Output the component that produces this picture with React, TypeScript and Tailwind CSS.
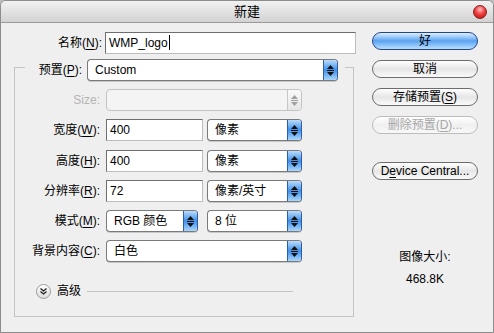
import React from 'react';

const cjk = { fontFamily: '"Liberation Sans", "Noto Sans CJK SC", sans-serif' };

const Stepper = ({ disabled }: { disabled?: boolean }) => (
  <div
    className={`w-[14px] h-full flex flex-col items-center justify-center gap-[1px] rounded-r-[4px] border-l ${
      disabled
        ? 'border-[#c8c8c8] bg-gradient-to-b from-[#fafafa] to-[#e6e6e6]'
        : 'border-[#2e5da8] bg-gradient-to-b from-[#b9dcfb] via-[#3d8fe8] to-[#a9d6fb]'
    }`}
  >
    <svg width="7" height="11" viewBox="0 0 7 11">
      <path d="M3.5 0 L7 4 L0 4 Z" fill={disabled ? '#a0a0a0' : '#101010'} />
      <rect x="0" y="5" width="7" height="1" fill={disabled ? '#a0a0a0' : '#101010'} />
      <path d="M0 7 L7 7 L3.5 11 Z" fill={disabled ? '#a0a0a0' : '#101010'} />
    </svg>
  </div>
);

const Select = ({ value, w, disabled }: { value?: string; w: string; disabled?: boolean }) => (
  <div
    className={`${w} h-[22px] flex items-stretch rounded-[4px] border overflow-hidden ${
      disabled ? 'border-[#c4c4c4] bg-[#f4f4f4]' : 'border-[#7a7a7a] border-r-[#2e5da8] bg-white shadow-[0_1px_0_#c8c8c8]'
    }`}
  >
    <div className="flex-1 pl-[7px] text-[12px] leading-[20px] text-black" style={cjk}>
      {value}
    </div>
    <Stepper disabled={disabled} />
  </div>
);

const Input = ({ value, w, caret }: { value: string; w: string; caret?: boolean }) => (
  <div
    className={`${w} h-[22px] border border-[#6e6e6e] border-b-[#bdbdbd] border-r-[#bdbdbd] bg-white pl-[3px] text-[12px] leading-[20px] text-black flex items-center`}
    style={cjk}
  >
    {value}
    {caret && <span className="inline-block w-[1px] h-[15px] bg-black ml-[1px]" />}
  </div>
);

const Label = ({ children, w = 'w-[100px]', dim }: { children: React.ReactNode; w?: string; dim?: boolean }) => (
  <div className={`${w} shrink-0 text-right text-[12px] pr-[1px] ${dim ? 'text-[#b4b4b4]' : 'text-black'}`} style={cjk}>
    {children}
  </div>
);

const Btn = ({ children, primary, disabled, mt }: { children: React.ReactNode; primary?: boolean; disabled?: boolean; mt: string }) => (
  <div
    className={`${mt} w-[106px] h-[18px] rounded-full border flex items-center justify-center text-[12px] leading-none ${
      primary
        ? 'border-[#24458c] bg-gradient-to-b from-[#dcefff] via-[#5aa2f0] to-[#b8e0ff] text-black'
        : disabled
        ? 'border-[#bcbcbc] bg-gradient-to-b from-[#ffffff] via-[#f0f0f0] to-[#f8f8f8] text-[#a8a8a8]'
        : 'border-[#6c6c6c] bg-gradient-to-b from-[#ffffff] via-[#e6e6e6] to-[#fafafa] text-black'
    }`}
    style={cjk}
  >
    {children}
  </div>
);

const U = ({ c }: { c: string }) => <span className="underline underline-offset-2">{c}</span>;

export default function App() {
  return (
    <div className="w-[494px] h-[333px] bg-[#bcbcbc] overflow-hidden">
      <div className="w-[494px] h-[333px] rounded-t-[6px] border border-[#8c8c8c] bg-[#efefef] flex flex-col overflow-hidden">
        {/* Title bar */}
        <div className="h-[22px] shrink-0 relative flex items-center justify-center border-b border-[#9a9a9a] bg-gradient-to-b from-[#f2f2f2] via-[#e2e2e2] to-[#d2d2d2]">
          <span className="text-[13px] text-black" style={cjk}>新建</span>
          <div className="absolute right-[6px] top-[4px] w-[14px] h-[14px] rounded-full border border-[#8a2020] bg-[radial-gradient(circle_at_50%_30%,#ffc0c0_0%,#f04040_45%,#b01010_100%)]" />
        </div>

        <div className="flex flex-1">
          {/* Left side */}
          <div className="w-[360px] shrink-0 flex flex-col">
            <div className="flex items-center mt-[9px] h-[21px]">
              <Label w="w-[102px]">名称(<U c="N" />):</Label>
              <div className="w-[2px]" />
              <Input value="WMP_logo" w="w-[251px]" caret />
            </div>

            {/* Group frame */}
            <div className="ml-[13px] mt-[14px] w-[340px] h-[250px] border border-[#c4c4c4] flex flex-col">
              <div className="-mt-[9px] ml-[10px] w-[320px] h-[22px] bg-[#efefef] flex items-center">
                <Label w="w-[58px]">预置(<U c="P" />):</Label>
                <div className="w-[4px]" />
                <Select value="Custom" w="w-[251px]" />
              </div>

              <div className="flex items-center mt-[8px]">
                <Label w="w-[86px]" dim>Size:</Label>
                <div className="w-[5px]" />
                <Select w="w-[196px]" disabled />
              </div>

              <div className="flex items-center mt-[8px]">
                <Label w="w-[86px]">宽度(<U c="W" />):</Label>
                <div className="w-[5px]" />
                <Input value="400" w="w-[97px]" />
                <div className="w-[4px]" />
                <Select value="像素" w="w-[95px]" />
              </div>

              <div className="flex items-center mt-[9px]">
                <Label w="w-[86px]">高度(<U c="H" />):</Label>
                <div className="w-[5px]" />
                <Input value="400" w="w-[97px]" />
                <div className="w-[4px]" />
                <Select value="像素" w="w-[95px]" />
              </div>

              <div className="flex items-center mt-[8px]">
                <Label w="w-[86px]">分辨率(<U c="R" />):</Label>
                <div className="w-[5px]" />
                <Input value="72" w="w-[97px]" />
                <div className="w-[4px]" />
                <Select value="像素/英寸" w="w-[95px]" />
              </div>

              <div className="flex items-center mt-[8px]">
                <Label w="w-[86px]">模式(<U c="M" />):</Label>
                <div className="w-[5px]" />
                <Select value="RGB 颜色" w="w-[92px]" />
                <div className="w-[9px]" />
                <Select value="8 位" w="w-[95px]" />
              </div>

              <div className="flex items-center mt-[8px]">
                <Label w="w-[86px]">背景内容(<U c="C" />):</Label>
                <div className="w-[5px]" />
                <Select value="白色" w="w-[196px]" />
              </div>

              <div className="flex items-center mt-[20px] ml-[21px]">
                <div className="w-[15px] h-[15px] rounded-full border border-[#9c9c9c] bg-gradient-to-b from-white to-[#dcdcdc] flex items-center justify-center">
                  <svg width="7" height="7" viewBox="0 0 7 7">
                    <path d="M0.5 0.5 L3.5 3 L6.5 0.5 M0.5 3.5 L3.5 6 L6.5 3.5" stroke="#202020" strokeWidth="1.3" fill="none" />
                  </svg>
                </div>
                <span className="ml-[6px] text-[12px] text-black" style={cjk}>高级</span>
                <div className="ml-[6px] w-[206px] h-[1px] bg-[#c4c4c4]" />
              </div>
            </div>
          </div>

          {/* Right side */}
          <div className="flex flex-col ml-[11px]">
            <Btn primary mt="mt-[9px]">好</Btn>
            <Btn mt="mt-[10px]">取消</Btn>
            <Btn mt="mt-[10px]">存储预置(<U c="S" />)</Btn>
            <Btn disabled mt="mt-[10px]">删除预置(<U c="D" />)...</Btn>
            <Btn mt="mt-[28px]">D<U c="e" />vice Central...</Btn>
            <div className="mt-[68px] w-[106px] text-center text-[12px] text-black" style={cjk}>图像大小:</div>
            <div className="mt-[4px] w-[106px] text-center text-[12px] text-black" style={cjk}>468.8K</div>
          </div>
        </div>
      </div>
    </div>
  );
}
